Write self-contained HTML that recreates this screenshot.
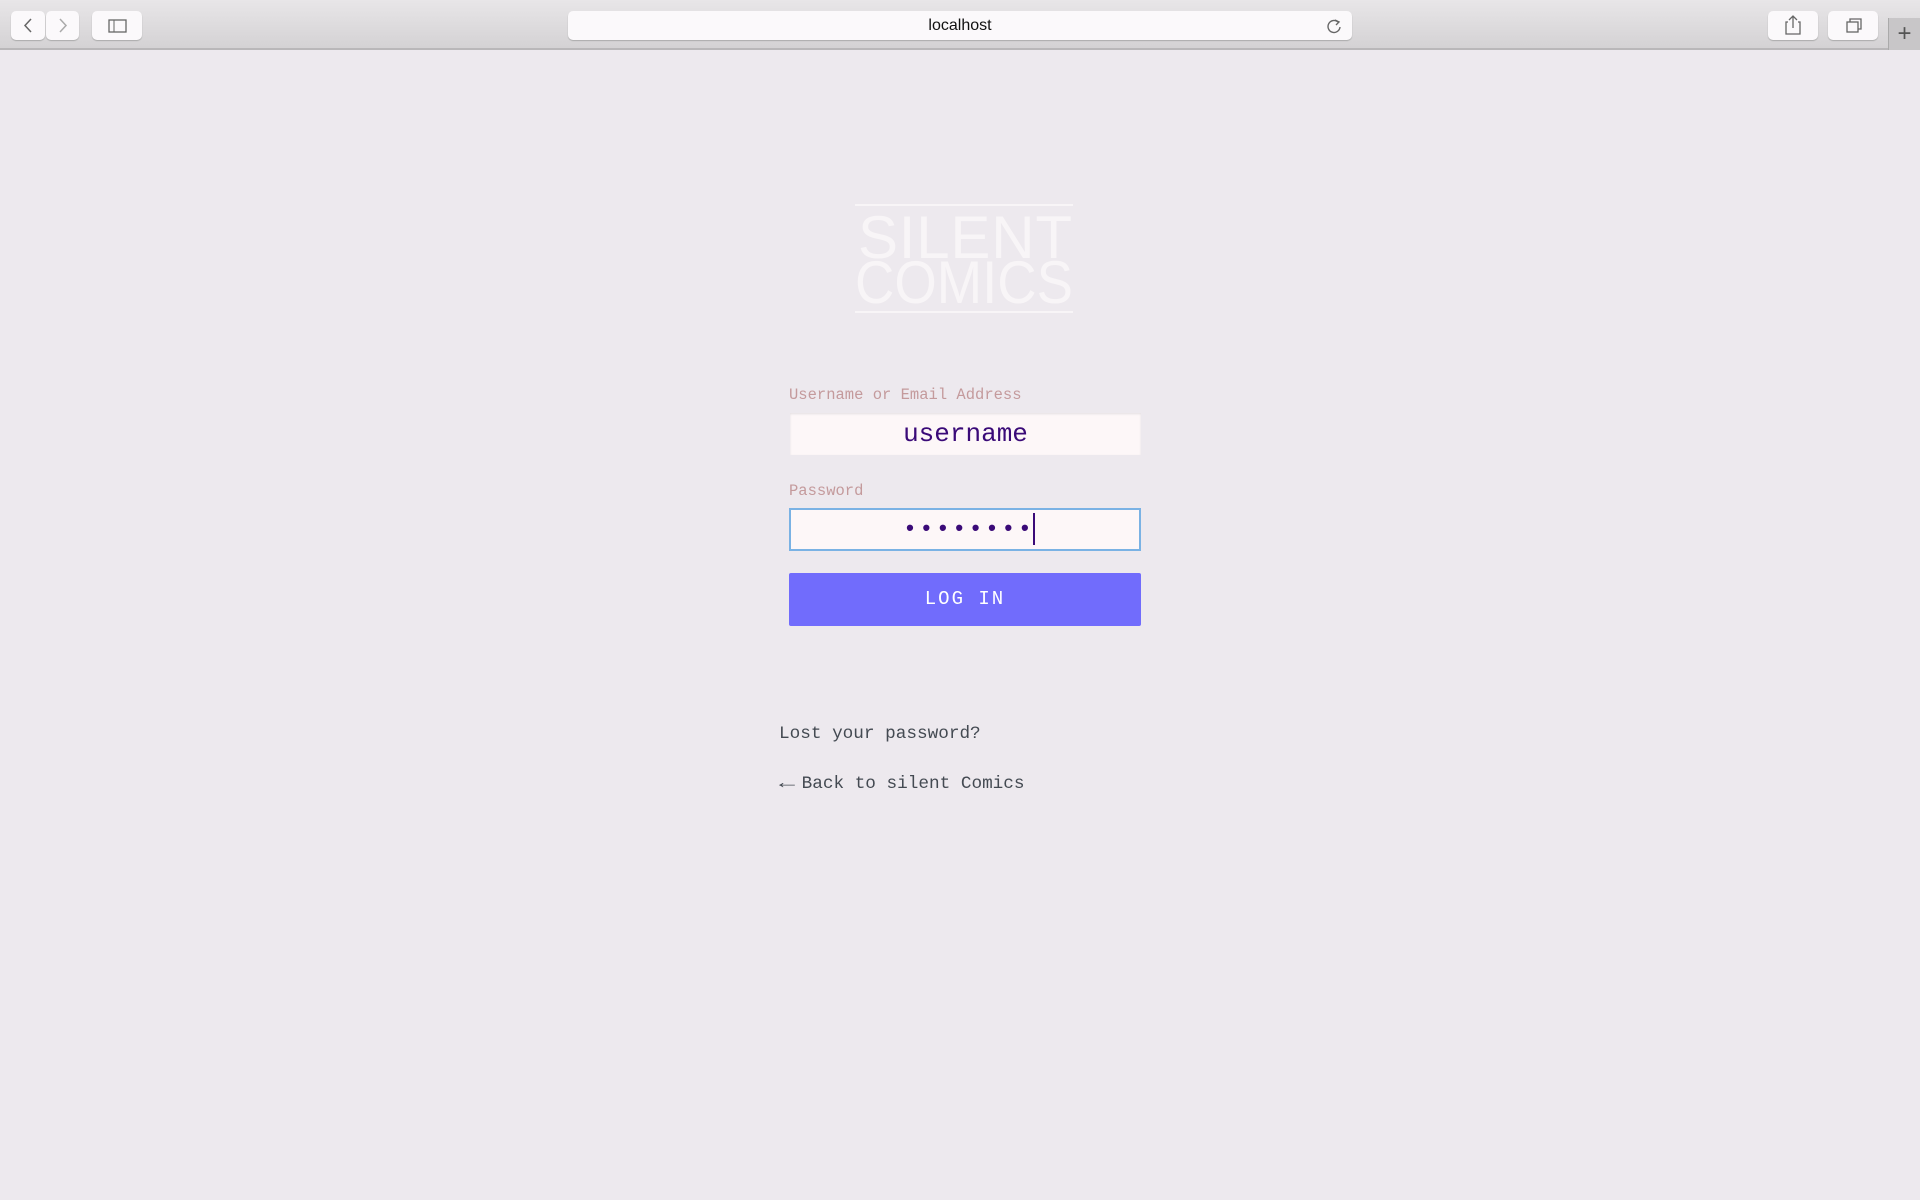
<!DOCTYPE html>
<html><head><meta charset="utf-8"><style>
*{margin:0;padding:0;box-sizing:border-box}
body{width:1920px;height:1200px;background:#ede9ee;position:relative;overflow:hidden;font-family:"Liberation Mono",monospace}
.tb{position:absolute;left:0;top:0;width:1920px;height:50px;background:linear-gradient(#e8e6e8,#d4d2d4);border-bottom:2px solid #b9b7b9}
.btn{position:absolute;top:11px;height:29px;background:#fbf9fb;border-radius:5px;box-shadow:0 1px 1px #aaa}
.addr{position:absolute;left:568px;top:11px;width:784px;height:29px;background:#fbf9fb;border-radius:5px;box-shadow:0 1px 1px #aaa;font-family:"Liberation Sans",sans-serif;font-size:16px;text-align:center;line-height:29px;color:#111}
.lbl{position:absolute;left:789px;font-size:15.5px;color:#c49a9c}
.inp{position:absolute;left:790px;width:351px;background:#fdf7f8;text-align:center;color:#3a0a78;font-size:26px}
.b{position:absolute;left:789px;top:573px;width:352px;height:53px;background:#716cfc;border-radius:2px;color:#fff;font-size:19px;letter-spacing:2px;text-align:center;line-height:53px}
.lk{position:absolute;left:779px;font-size:17.7px;color:#444a52}
</style></head><body>
<div class="tb">
 <div class="btn" style="left:11px;width:34px"><svg width="34" height="29"><path d="M20 8 L14 14.5 L20 21" stroke="#666" stroke-width="1.5" fill="none"/></svg></div>
 <div class="btn" style="left:46px;width:33px"><svg width="33" height="29"><path d="M14 8 L20 14.5 L14 21" stroke="#aaa" stroke-width="1.5" fill="none"/></svg></div>
 <div class="btn" style="left:92px;width:50px"><svg width="50" height="29"><rect x="17" y="9" width="17" height="12" stroke="#666" fill="none" stroke-width="1.3"/><line x1="22" y1="9" x2="22" y2="21" stroke="#666"/></svg></div>
 <div class="addr">localhost<svg style="position:absolute;right:10px;top:7px" width="16" height="16"><path d="M12 4 A6 6 0 1 0 14 9" stroke="#666" stroke-width="1.4" fill="none"/><path d="M9 2 L13 4 L10 7" stroke="#666" stroke-width="1.4" fill="none"/></svg></div>
 <div class="btn" style="left:1768px;width:50px"><svg width="50" height="29"><path d="M20 11 H18 V23 H32 V11 H30 M25 5 V17 M21 9 L25 5 L29 9" stroke="#666" stroke-width="1.3" fill="none"/></svg></div>
 <div class="btn" style="left:1828px;width:50px"><svg width="50" height="29"><rect x="19" y="11" width="11" height="10" stroke="#666" fill="none" stroke-width="1.3"/><path d="M22 11 V8 H33 V18 H30" stroke="#666" fill="none" stroke-width="1.3"/></svg></div>
 <div style="position:absolute;left:1888px;top:18px;width:32px;height:32px;background:#c8c6c8;border-left:1px solid #aaa;color:#555;font-size:24px;text-align:center;line-height:32px;font-family:'Liberation Sans'">+</div>
</div>
<svg style="position:absolute;left:850px;top:200px" width="230" height="116">
 <rect x="5" y="4" width="218" height="2" fill="#f8f5f7"/>
 <rect x="5" y="111" width="218" height="2" fill="#f8f5f7"/>
 <text x="8" y="58" font-family="Liberation Sans, sans-serif" font-size="60" fill="#f8f5f7" textLength="214" lengthAdjust="spacing">SILENT</text>
 <text x="5" y="103" font-family="Liberation Sans, sans-serif" font-size="60" fill="#f8f5f7" textLength="218" lengthAdjust="spacingAndGlyphs">COMICS</text>
</svg>
<div class="lbl" style="top:386px">Username or Email Address</div>
<div class="inp" style="top:413px;height:42px;line-height:42px;box-shadow:inset 0 1px 2px #e4dfe2">username</div>
<div class="lbl" style="top:482px">Password</div>
<div class="inp" style="top:508px;height:43px;line-height:40px;left:789px;width:352px;border:2px solid #7ab2e4;font-size:22px;letter-spacing:3.2px;padding-left:8px"><span style="font-weight:bold">••••••••</span><span style="display:inline-block;width:2px;height:32px;background:#3a0a78;vertical-align:middle;margin-left:-2px"></span></div>
<div class="b">LOG IN</div>
<div class="lk" style="top:724px">Lost your password?</div>
<div class="lk" style="top:774px"><span style="display:inline-block;transform:scaleX(1.5);transform-origin:left;margin-right:12px">←</span>Back to silent Comics</div>
</body></html>
